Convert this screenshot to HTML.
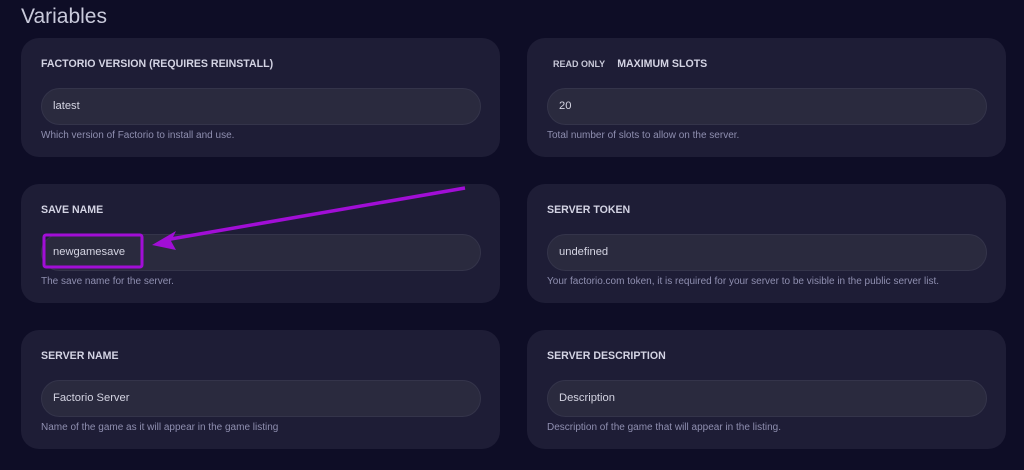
<!DOCTYPE html>
<html><head><style>
*{margin:0;padding:0;box-sizing:border-box}
body{width:1024px;height:470px;background:#0e0d26;font-family:"Liberation Sans",sans-serif;position:relative;overflow:hidden}
h1{position:absolute;left:21px;top:5px;font-size:21px;font-weight:normal;color:#c9cadb}
.card{position:absolute;width:479px;height:119px;background:#1e1d36;border-radius:18px}
.lbl{position:absolute;left:20px;top:20px;font-size:10.6px;font-weight:bold;color:#d4d4e4}
.ro{font-size:9px;color:#c8c8d8;margin-right:12px;margin-left:6px}
.inp{position:absolute;left:20px;top:50px;width:440px;height:37px;background:#2a2a3e;border:1px solid #34344a;border-radius:19px;color:#d4d4e2;font-size:11.2px;padding:11px 0 0 11px}
.help{position:absolute;left:20px;top:92px;font-size:10px;color:#8f8fb0}
</style></head><body>
<h1>Variables</h1>
<div class="card" style="left:21px;top:38px"><div class="lbl">FACTORIO VERSION (REQUIRES REINSTALL)</div><div class="inp">latest</div><div class="help">Which version of Factorio to install and use.</div></div>
<div class="card" style="left:527px;top:38px"><div class="lbl"><span class="ro">READ ONLY</span>MAXIMUM SLOTS</div><div class="inp">20</div><div class="help">Total number of slots to allow on the server.</div></div>
<div class="card" style="left:21px;top:184px"><div class="lbl">SAVE NAME</div><div class="inp">newgamesave</div><div class="help">The save name for the server.</div></div>
<div class="card" style="left:527px;top:184px"><div class="lbl">SERVER TOKEN</div><div class="inp">undefined</div><div class="help">Your factorio.com token, it is required for your server to be visible in the public server list.</div></div>
<div class="card" style="left:21px;top:330px"><div class="lbl">SERVER NAME</div><div class="inp">Factorio Server</div><div class="help">Name of the game as it will appear in the game listing</div></div>
<div class="card" style="left:527px;top:330px"><div class="lbl">SERVER DESCRIPTION</div><div class="inp">Description</div><div class="help">Description of the game that will appear in the listing.</div></div>
<svg style="position:absolute;left:0;top:0" width="1024" height="470">
<rect x="44" y="235" width="98" height="32" rx="2" fill="none" stroke="#a10ed6" stroke-width="3"/>
<line x1="465" y1="188" x2="165" y2="240" stroke="#a10ed6" stroke-width="3.5"/>
<polygon points="152,245 176,231 171,241 176,250" fill="#a10ed6"/>
</svg>
</body></html>
